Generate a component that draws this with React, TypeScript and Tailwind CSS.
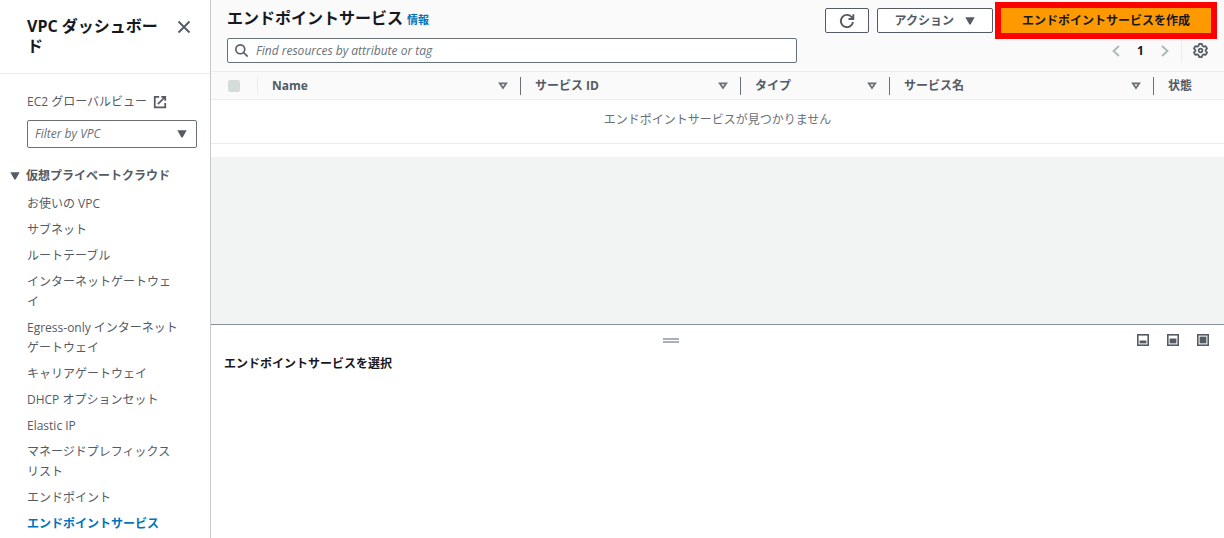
import React from "react";

const vpcLinks = [
  "お使いの VPC",
  "サブネット",
  "ルートテーブル",
  "インターネットゲートウェイ",
  "Egress-only インターネットゲートウェイ",
  "キャリアゲートウェイ",
  "DHCP オプションセット",
  "Elastic IP",
  "マネージドプレフィックスリスト",
  "エンドポイント",
  "エンドポイントサービス",
];

const columns = [
  { label: "Name", width: "w-[263px]", first: true },
  { label: "サービス ID", width: "w-[220px]" },
  { label: "タイプ", width: "w-[149px]" },
  { label: "サービス名", width: "w-[264px]" },
];

function CaretDown({ className = "" }: { className?: string }) {
  return (
    <svg viewBox="0 0 10 8" className={`w-[10px] h-2 shrink-0 ${className}`} fill="currentColor" aria-hidden="true">
      <path d="M0.300 0.300h9.400L5.600 7.600H4.400z" />
    </svg>
  );
}

function SortIcon() {
  return (
    <svg viewBox="0 0 10 8" className="w-[10px] h-2 shrink-0 text-[#687078]" fill="none" stroke="currentColor" strokeWidth="1.8" aria-hidden="true">
      <path d="M1.8 1.4h6.4L5 5.900z" />
    </svg>
  );
}

function PanelIcon({ top }: { top: number }) {
  return (
    <svg viewBox="0 0 12 12" className="w-3 h-3" aria-hidden="true">
      <rect x="0.8" y="0.8" width="10.4" height="10.4" fill="none" stroke="currentColor" strokeWidth="1.6" />
      <rect x="2.6" y={top} width="6.800" height={9.4 - top} fill="currentColor" />
    </svg>
  );
}

function Sidebar() {
  return (
    <nav className="w-[211px] shrink-0 bg-white border-r border-[#c4cbcc]">
      <div className="flex items-start justify-between pl-[27px] pr-[19px] pt-4 pb-[17px] border-b border-[#eaeded]">
        <h2 className="w-[136px] text-base leading-5 font-bold text-[#16191f]">VPC ダッシュボード</h2>
        <button aria-label="閉じる" className="mt-1">
          <svg viewBox="0 0 14 14" className="w-[14px] h-[14px]" fill="none" stroke="currentColor" strokeWidth="1.8">
            <path d="M1.5 1.5l11 11M12.5 1.5l-11 11" />
          </svg>
        </button>
      </div>

      <div className="pl-[27px] pr-[13px] pt-[18px]">
        <a href="#ec2" className="flex items-center gap-[6px] leading-5">
          EC2 グローバルビュー
          <svg viewBox="0 0 16 16" className="w-[14px] h-[14px]" fill="none" stroke="currentColor" strokeWidth="2">
            <path d="M7 2H2v12h12V9M9.500 2H14v4.500M5.500 10.500L14 2" />
          </svg>
        </a>
        <div className="relative mt-2">
          <select
            aria-label="Filter by VPC"
            className="block w-full h-7 appearance-none border border-[#687078] rounded-[2px] bg-white pl-[7px] pr-6 text-xs italic text-[#687078]"
          >
            <option>Filter by VPC</option>
          </select>
          <CaretDown className="absolute right-[10px] top-[10px] pointer-events-none" />
        </div>
      </div>

      <h3 className="flex items-center gap-[6px] pl-[10px] mt-[18px] leading-5 font-bold">
        <CaretDown />
        仮想プライベートクラウド
      </h3>
      <ul className="flex flex-col gap-[6px] mt-2 pl-[27px] pr-[28px]">
        {vpcLinks.map((link, i) => (
          <li key={link} className="leading-5">
            <a
              href="#vpc"
              className={`block break-all ${i === vpcLinks.length - 1 ? "font-bold text-[#0073bb]" : ""}`}
            >
              {link}
            </a>
          </li>
        ))}
      </ul>
    </nav>
  );
}

function Toolbar() {
  return (
    <header className="bg-[#fafafa] pl-4 pr-[13px] pt-2 pb-2">
      <div className="flex items-start justify-between">
        <div className="flex items-baseline gap-1">
          <h1 className="text-base leading-5 font-bold text-[#16191f]">エンドポイントサービス</h1>
          <a href="#info" className="text-[11px] leading-4 font-bold text-[#0073bb]">情報</a>
        </div>
        <div className="flex gap-2">
          <button aria-label="更新" className="flex items-center justify-center w-11 h-[25px] bg-white border border-[#545b64] rounded-[2px]">
            <svg viewBox="0 0 16 16" className="w-4 h-4" fill="none" stroke="currentColor" strokeWidth="1.9">
              <path d="M14 9A6.100 6.100 0 1 1 12.600 4L14 5.500M14.300 1.200v4.800H9.500" />
            </svg>
          </button>
          <button className="flex items-center gap-[11px] h-[25px] px-[17px] bg-white border border-[#545b64] rounded-[2px] font-bold">
            アクション
            <CaretDown />
          </button>
          <button className="h-[25px] w-[210px] bg-[#ff9900] font-bold text-[#16191f] outline-6 outline-[#ff0000]">
            エンドポイントサービスを作成
          </button>
        </div>
      </div>

      <div className="flex items-center justify-between mt-[5px]">
        <div className="relative flex-1 max-w-[570px]">
          <svg viewBox="0 0 16 16" className="absolute left-2 top-[6px] w-[13px] h-[13px]" fill="none" stroke="currentColor" strokeWidth="2">
            <circle cx="6.5" cy="6.5" r="5.5" />
            <path d="M10.5 10.5l5 5" />
          </svg>
          <input
            type="search"
            aria-label="Find resources by attribute or tag"
            placeholder="Find resources by attribute or tag"
            className="block w-full h-[25px] bg-white border border-[#687078] rounded-[2px] pl-7 pr-2 text-xs placeholder:italic placeholder:text-[#687078]"
          />
        </div>
        <div className="flex items-center">
          <button aria-label="前へ" className="text-[#aab7b8]">
            <svg viewBox="0 0 8 12" className="w-2 h-3" fill="none" stroke="currentColor" strokeWidth="1.8">
              <path d="M7 1L1.5 6L7 11" />
            </svg>
          </button>
          <button className="w-[41px] font-bold text-[#16191f]">1</button>
          <button aria-label="次へ" className="text-[#aab7b8]">
            <svg viewBox="0 0 8 12" className="w-2 h-3" fill="none" stroke="currentColor" strokeWidth="1.8">
              <path d="M1 1l5.5 5L1 11" />
            </svg>
          </button>
          <span className="w-px h-6 ml-3 mr-[11px] bg-[#eaeded]" />
          <button aria-label="設定" className="mr-[3px]">
            <svg viewBox="0 0 16 16" className="w-[15px] h-[15px]" fill="none" stroke="currentColor" strokeWidth="1.8" strokeLinejoin="round">
              <path d="M6.5 1h3l.5 2 1.5.9 2-.6 1.5 2.6L13.500 7.300v1.400L15 10.100l-1.500 2.600-2-.6-1.500.9-.5 2h-3L6 13l-1.500-.9-2 .6L1 10.100 2.500 8.700V7.300L1 5.900l1.500-2.600 2 .6L6 3z" />
              <circle cx="8" cy="8" r="2" />
            </svg>
          </button>
        </div>
      </div>
    </header>
  );
}

function ServicesTable() {
  return (
    <table className="w-full table-fixed border-collapse">
      <thead>
        <tr className="h-7 bg-[#fafafa] border-y border-[#eaeded]">
          <th className="w-[46px] pl-[17px]">
            <input type="checkbox" disabled aria-label="すべて選択" className="block appearance-none w-3 h-3 rounded-[2px] bg-[#d5dbdb]" />
          </th>
          {columns.map((col) => (
            <th key={col.label} className={`${col.width} p-0 text-left font-bold`}>
              <div className={`flex items-center justify-between h-[18px] pl-[14px] pr-3 border-l ${col.first ? "border-[#eaeded]" : "border-[#687078]"}`}>
                {col.label}
                <SortIcon />
              </div>
            </th>
          ))}
          <th className="p-0 text-left font-bold">
            <div className="flex items-center h-[18px] pl-[14px] border-l border-[#687078]">状態</div>
          </th>
        </tr>
      </thead>
      <tbody>
        <tr className="border-b border-[#eaeded]">
          <td colSpan={6} className="h-11 pb-1 text-center text-[#687078]">
            エンドポイントサービスが見つかりません
          </td>
        </tr>
      </tbody>
    </table>
  );
}

function SplitPanel() {
  return (
    <section className="min-h-[214px] bg-white border-t border-[#879196]">
      <div className="grid grid-cols-3 items-center pt-[9px] pr-[15px] pl-[14px]">
        <span />
        <button aria-label="パネルのサイズを変更" className="justify-self-center flex flex-col gap-px mr-[92px]">
          <span className="block w-4 h-[2px] bg-[#aab0b5]" />
          <span className="block w-4 h-[2px] bg-[#aab0b5]" />
        </button>
        <div className="flex justify-end gap-[18px]">
          <button aria-label="小"><PanelIcon top={6.5} /></button>
          <button aria-label="中"><PanelIcon top={4.5} /></button>
          <button aria-label="大"><PanelIcon top={2.6} /></button>
        </div>
      </div>
      <h2 className="mt-2 pl-[13px] leading-5 font-bold text-[#16191f]">エンドポイントサービスを選択</h2>
    </section>
  );
}

export default function App() {
  return (
    <div className="flex min-h-screen bg-[#f2f3f3] text-xs text-[#545b64] font-['Open_Sans','Noto_Sans_CJK_JP',sans-serif]">
      <Sidebar />
      <main className="flex-1 min-w-0 flex flex-col">
        <div className="bg-white pb-[13px]">
          <Toolbar />
          <ServicesTable />
        </div>
        <div className="flex-1" />
        <SplitPanel />
      </main>
    </div>
  );
}
